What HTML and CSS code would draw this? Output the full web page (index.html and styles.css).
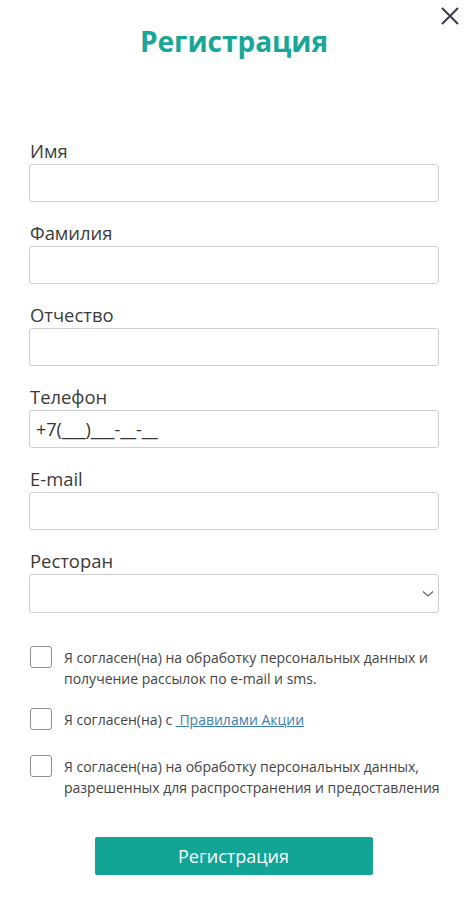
FILE: index.html
```html
<!DOCTYPE html>
<html lang="ru">
<head>
<meta charset="utf-8">
<title>Регистрация</title>
<link rel="stylesheet" href="styles.css">
</head>
<body>
<div class="modal">
  <button class="close" aria-label="Закрыть">
    <svg width="18" height="18" viewBox="0 0 18 18"><path d="M1 1 L17 17 M17 1 L1 17" stroke="#3a3d4a" stroke-width="2" fill="none"/></svg>
  </button>
  <h1 class="title">Регистрация</h1>
  <form class="form">
    <div class="field">
      <label class="label">Имя</label>
      <div class="input"></div>
    </div>
    <div class="field">
      <label class="label">Фамилия</label>
      <div class="input"></div>
    </div>
    <div class="field">
      <label class="label">Отчество</label>
      <div class="input"></div>
    </div>
    <div class="field">
      <label class="label">Телефон</label>
      <div class="input">+7(___)___-__-__</div>
    </div>
    <div class="field">
      <label class="label">E-mail</label>
      <div class="input"></div>
    </div>
    <div class="field">
      <label class="label">Ресторан</label>
      <div class="input select">
        <svg width="12" height="8" viewBox="0 0 12 8"><path d="M1 1.5 L6 6 L11 1.5" stroke="#666" stroke-width="1.2" fill="none"/></svg>
      </div>
    </div>
    <div class="checks">
      <div class="check c1">
        <span class="box"></span>
        <span class="ctext">Я согласен(на) на обработку персональных данных и получение рассылок по e-mail и sms.</span>
      </div>
      <div class="check c2">
        <span class="box"></span>
        <span class="ctext">Я согласен(на) с <a href="#" class="link">&nbsp;Правилами Акции</a></span>
      </div>
      <div class="check c3">
        <span class="box"></span>
        <span class="ctext">Я согласен(на) на обработку персональных данных, разрешенных для распространения и предоставления</span>
      </div>
    </div>
    <div class="actions">
      <button type="button" class="submit">Регистрация</button>
    </div>
  </form>
</div>
</body>
</html>
```

FILE: styles.css
```css
* { box-sizing: border-box; }
html, body { margin: 0; padding: 0; background: #fff; }
body { font-family: "Open Sans", "Noto Sans", sans-serif; color: #333; }
.modal { position: relative; padding: 0 34px 0 29px; width: 473px; }
.close {
  position: absolute; top: 7px; right: 14px;
  width: 18px; height: 18px; padding: 0; border: 0; background: none;
}
.close svg { display: block; }
.title {
  margin: 0; padding-top: 19px; height: 139px;
  text-align: center; font-size: 28px; font-weight: 700;
  color: #17a697; line-height: 44px;
}
.form { display: flex; flex-direction: column; }
.field { display: flex; flex-direction: column; margin-bottom: 19px; }
.label { font-size: 18.4px; line-height: 24px; margin-bottom: 1px; color: #3a3a3a; padding-left: 1px; }
.input {
  height: 38px; border: 1px solid #cfcfcf; border-radius: 3px;
  font-size: 18px; line-height: 36px; padding-left: 6px; color: #333;
  display: flex; align-items: center;
}
.select { justify-content: flex-end; padding-right: 4px; height: 39px; }
.checks { display: flex; flex-direction: column; padding-top: 14px; margin-right: -30px; }
.check { display: flex; align-items: flex-start; gap: 12px; padding-left: 1px; }
.box {
  flex: 0 0 22px; width: 22px; height: 22px; border: 1px solid #8f8f8f; border-radius: 3px;
}
.ctext { font-size: 14px; line-height: 21px; color: #444; padding-top: 1px; }
.c1 { margin-bottom: 19px; }
.c2 { margin-bottom: 25px; }
.link { color: #3b80b1; text-decoration: underline; }
.actions { display: flex; justify-content: center; padding-top: 39px; margin-right: 1px; }
.submit {
  width: 278px; height: 38px; border: 0; border-radius: 2px;
  background: #12a596; color: #fff; font-family: "Open Sans", sans-serif;
  font-size: 18px; padding: 0;
}
```
